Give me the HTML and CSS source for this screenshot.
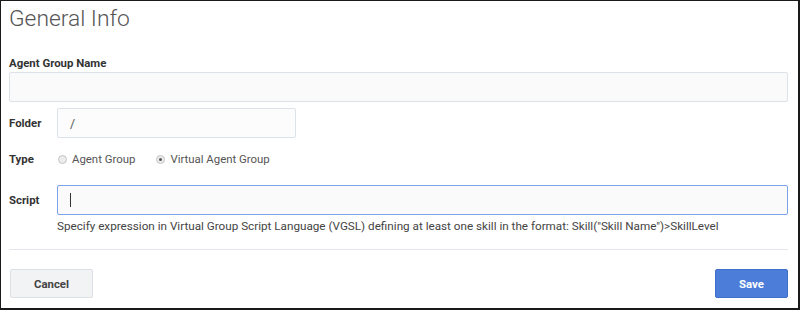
FILE: index.html
```html
<!DOCTYPE html>
<html>
<head>
<meta charset="utf-8">
<link rel="stylesheet" href="styles.css">
</head>
<body>
<div class="frame">
  <h1 class="title">General Info</h1>
  <div class="label name-label">Agent Group Name</div>
  <div class="input wide"></div>
  <div class="row folder-row">
    <div class="label col-label">Folder</div>
    <div class="input folder"><span class="value">/</span></div>
  </div>
  <div class="row type-row">
    <div class="label col-label">Type</div>
    <div class="radio-opt"><span class="radio"></span><span class="radio-text">Agent Group</span></div>
    <div class="radio-opt second"><span class="radio checked"></span><span class="radio-text">Virtual Agent Group</span></div>
  </div>
  <div class="row script-row">
    <div class="label col-label">Script</div>
    <div class="input script"><span class="caret"></span></div>
  </div>
  <div class="help">Specify expression in Virtual Group Script Language (VGSL) defining at least one skill in the format: Skill("Skill Name")&gt;SkillLevel</div>
  <div class="divider"></div>
  <div class="actions">
    <div class="btn cancel">Cancel</div>
    <div class="btn save">Save</div>
  </div>
</div>
</body>
</html>
```
FILE: styles.css
```css
html, body {
  margin: 0;
  padding: 0;
  background: #fff;
}
.frame {
  box-sizing: border-box;
  width: 800px;
  height: 310px;
  border-top: 1px solid #1a1a1a;
  border-left: 1px solid #1a1a1a;
  border-right: 2px solid #1a1a1a;
  border-bottom: 2px solid #1a1a1a;
  padding: 4px 10px 0 8px;
  font-family: Roboto, "Liberation Sans", sans-serif;
  font-size: 11.4px;
  color: #333;
}
.title {
  margin: 0;
  font-weight: 300;
  font-size: 22.8px;
  line-height: 28px;
  color: #555;
}
.label {
  font-weight: 700;
  font-size: 11.4px;
  line-height: 16px;
  color: #333;
}
.name-label {
  margin-top: 22px;
}
.input {
  box-sizing: border-box;
  height: 30px;
  background: #fafafa;
  border: 1px solid #dde2e8;
  border-radius: 2px;
}
.wide {
  margin-top: 1px;
}
.row {
  display: flex;
  align-items: center;
  height: 30px;
}
.col-label {
  width: 48px;
  flex: none;
}
.folder-row {
  margin-top: 6px;
}
.folder {
  width: 239px;
  display: flex;
  align-items: center;
  padding-left: 12px;
  background: #fcfcfc;
}
.value {
  font-size: 12.4px;
  color: #555;
}
.type-row {
  margin-top: 6px;
}
.radio-opt {
  display: flex;
  align-items: center;
  color: #555;
  font-size: 11.4px;
  line-height: 16px;
}
.second {
  margin-left: 20px;
}
.radio {
  box-sizing: border-box;
  width: 9px;
  height: 9px;
  border-radius: 50%;
  border: 1px solid #c4c4c4;
  background: #ececec;
  margin-left: 1px;
  margin-right: 5px;
  position: relative;
}
.radio.checked::after {
  content: "";
  position: absolute;
  left: 2px;
  top: 2px;
  width: 3px;
  height: 3px;
  border-radius: 50%;
  background: #555;
}
.script-row {
  margin-top: 11px;
}
.script {
  flex: 1;
  border: 1px solid #7ba1e8;
  display: flex;
  align-items: center;
  padding-left: 12px;
}
.caret {
  width: 1px;
  height: 14px;
  background: #333;
}
.help {
  margin-top: 3px;
  margin-left: 48px;
  font-size: 11.7px;
  line-height: 16px;
  color: #444;
}
.divider {
  margin-top: 15px;
  height: 1px;
  background: #e3e6ea;
}
.actions {
  margin-top: 19px;
  display: flex;
  justify-content: space-between;
}
.btn {
  box-sizing: border-box;
  height: 29px;
  display: flex;
  align-items: center;
  justify-content: center;
  font-weight: 700;
  font-size: 11.4px;
  border-radius: 2px;
}
.cancel {
  width: 83px;
  margin-left: 1px;
  background: #f2f3f5;
  border: 1px solid #dcdfe3;
  color: #444;
}
.save {
  width: 73px;
  background: #4c7ed9;
  border: 1px solid #3f6fcb;
  color: #fff;
}
```
